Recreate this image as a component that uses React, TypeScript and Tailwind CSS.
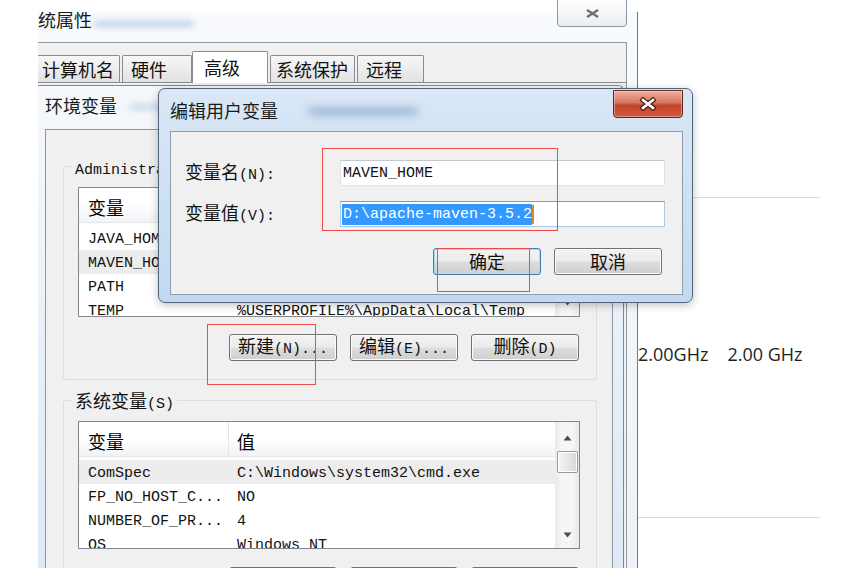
import React from "react";

const zh = "font-['Noto_Sans_CJK_SC',sans-serif] text-[18px]";
const en = "font-['Liberation_Mono','Noto_Sans_CJK_SC',monospace] text-[15px]";

const Z = ({ children }: { children: React.ReactNode }) => <span className={zh}>{children}</span>;
const M = ({ children }: { children: React.ReactNode }) => <span className={en}>{children}</span>;

type Row = [string, string];

const userVars: Row[] = [
  ["JAVA_HOME", "C:\\Program Files\\Java\\jdk1.8.0_151"],
  ["MAVEN_HOME", "D:\\apache-maven-3.5.2"],
  ["PATH", "%JAVA_HOME%\\bin;%MAVEN_HOME%\\bin"],
  ["TEMP", "%USERPROFILE%\\AppData\\Local\\Temp"],
  ["TMP", "%USERPROFILE%\\AppData\\Local\\Temp"],
];

const sysVars: Row[] = [
  ["ComSpec", "C:\\Windows\\system32\\cmd.exe"],
  ["FP_NO_HOST_C...", "NO"],
  ["NUMBER_OF_PR...", "4"],
  ["OS", "Windows_NT"],
  ["Path", "C:\\Windows\\system32;C:\\Windows"],
];

function WinButton({ children, focused = false }: { children: React.ReactNode; focused?: boolean }) {
  return (
    <div
      className={`flex h-[27px] w-[108px] shrink-0 items-center justify-center rounded-[3px] border bg-[linear-gradient(#f3f3f3_0%,#ebebeb_48%,#dddddd_52%,#cfcfcf_100%)] text-[#111] ${
        focused
          ? "border-[#3c7fb1] shadow-[inset_0_0_0_1px_#a6def7]"
          : "border-[#707070] shadow-[inset_0_0_0_1px_#fcfcfc]"
      }`}
    >
      <span className="whitespace-nowrap leading-[18px]">{children}</span>
    </div>
  );
}

function Scrollbar() {
  return (
    <div className="flex h-full w-[24px] shrink-0 flex-col items-center bg-[linear-gradient(90deg,#e9e9e9,#f6f6f6_30%,#f6f6f6_70%,#e9e9e9)]">
      <svg className="mt-[13px]" width="9" height="6" viewBox="0 0 9 6">
        <path d="M0.5 5.5 L4.5 0.5 L8.5 5.5Z" fill="#4d4d4d" />
      </svg>
      <div className="mt-[10px] h-[22px] w-[21px] rounded-[2px] border border-[#9a9a9a] bg-[linear-gradient(90deg,#f6f6f6,#e8e8e8_50%,#d8d8d8)] shadow-[inset_0_0_0_1px_#ffffff]" />
      <div className="flex-1" />
      <svg className="mb-[10px]" width="9" height="6" viewBox="0 0 9 6">
        <path d="M0.5 0.5 L4.5 5.5 L8.5 0.5Z" fill="#4d4d4d" />
      </svg>
    </div>
  );
}

function VarList({ rows, highlight, h }: { rows: Row[]; highlight: number; h: string }) {
  return (
    <div className={`flex w-[502px] overflow-hidden border border-[#828790] bg-white ${h}`}>
      <div className="flex min-w-0 flex-1 flex-col">
        <div className="flex h-[35px] shrink-0 border-b border-[#e3e6ea] bg-[linear-gradient(#ffffff_45%,#f1f3f5_100%)] leading-[18px]">
          <div className="flex w-[150px] items-center border-r border-[#e3e6ea] pl-[9px] pt-[3px]">
            <Z>变量</Z>
          </div>
          <div className="flex items-center pl-[8px] pt-[3px]">
            <Z>值</Z>
          </div>
        </div>
        <div className="mt-[3px]">
          {rows.map(([k, v], i) => (
            <div
              key={k}
              className={`flex h-[24px] items-center whitespace-nowrap leading-[24px] text-[#111] ${
                i === highlight ? "bg-[#ededed]" : ""
              }`}
            >
              <div className="w-[150px] shrink-0 pl-[9px]">
                <M>{k}</M>
              </div>
              <div className="pl-[8px]">
                <M>{v}</M>
              </div>
            </div>
          ))}
        </div>
      </div>
      <Scrollbar />
    </div>
  );
}

function Tab({ label, w, pl, extra = "", selected = false }: { label: string; w: string; pl: string; extra?: string; selected?: boolean }) {
  return (
    <div
      className={`flex items-center border border-b-0 border-[#898c95] leading-[18px] text-[#111] ${w} ${pl} ${extra} ${
        selected ? "z-10 -mb-[1px] h-[32px] rounded-t-[2px] bg-white pb-[1px]" : "h-[27px] rounded-t-[2px] bg-[linear-gradient(#f7f7f7,#e2e2e2)]"
      }`}
    >
      <Z>{label}</Z>
    </div>
  );
}

function SystemWindow() {
  return (
    <div className="absolute left-[38px] top-[12px] flex h-[556px] w-[600px] flex-col overflow-hidden border-r border-[#6b7785] bg-[linear-gradient(#f8fafc,#eef2f6)]">
      <div className="flex h-[30px] shrink-0 items-start leading-[18px] text-[#1a1a1a]">
        <span className={`-ml-[18px] -mt-[2px] ${zh}`}>系统属性</span>
        <div className="ml-[2px] mt-[9px] h-[6px] w-[100px] rounded-full bg-[#bcd0e4] blur-[3px]" />
      </div>
      <div className="mr-[10px] flex-1 border-r border-t border-[#8e99a6] bg-[#f0f0f0]">
        <div className="flex h-[40px] items-end border-b border-[#898c95]">
          <Tab label="计算机名" w="w-[84px]" pl="pl-[5px]" extra="-ml-[2px]" />
          <Tab label="硬件" w="w-[70px]" pl="pl-[8px]" extra="ml-[2px]" />
          <Tab label="高级" w="w-[76px]" pl="pl-[11px]" selected />
          <Tab label="系统保护" w="w-[85px]" pl="pl-[5px]" extra="ml-[2px]" />
          <Tab label="远程" w="w-[67px]" pl="pl-[8px]" extra="ml-[2px]" />
        </div>
      </div>
    </div>
  );
}

function EnvWindow() {
  return (
    <div className="absolute left-[38px] top-[85px] flex h-[483px] w-[586px] flex-col overflow-hidden rounded-tr-[6px] border-r border-t border-[#7d8896] bg-[linear-gradient(#f5f8fb,#dde9f4)]">
      <div className="flex h-[43px] shrink-0 items-start pl-[7px] pt-[10px] leading-[18px] text-[#1a1a1a]">
        <Z>环境变量</Z>
        <div className="ml-[12px] mt-[8px] h-[6px] w-[90px] rounded-full bg-[#c9d8e8] blur-[3px]" />
      </div>
      <div className="ml-[7px] mr-[10px] flex-1 border-l border-r border-t border-[#8d97a3] bg-[#f0f0f0]">
        <fieldset className="ml-[17px] mt-[27px] w-[534px] rounded-[3px] border border-[#d5dfe5]">
          <legend className="ml-[8px] flex h-[18px] items-baseline whitespace-nowrap px-[3px] leading-[18px] text-[#111]">
            <M>Administrator&nbsp;</M>
            <Z>的用户变量</Z>
            <M>(U)</M>
          </legend>
          <div className="ml-[14px] mt-[12px]">
            <VarList rows={userVars} highlight={1} h="h-[130px]" />
          </div>
          <div className="mt-[17px] flex justify-end gap-[13px] pb-[18px] pr-[17px]">
            <WinButton>
              <Z>新建</Z>
              <M>(N)...</M>
            </WinButton>
            <WinButton>
              <Z>编辑</Z>
              <M>(E)...</M>
            </WinButton>
            <WinButton>
              <Z>删除</Z>
              <M>(D)</M>
            </WinButton>
          </div>
        </fieldset>
        <fieldset className="ml-[17px] mt-[11px] w-[534px] rounded-[3px] border border-[#d5dfe5]">
          <legend className="ml-[8px] flex h-[18px] items-baseline whitespace-nowrap px-[3px] leading-[18px] text-[#111]">
            <Z>系统变量</Z>
            <M>(S)</M>
          </legend>
          <div className="ml-[14px] mt-[12px]">
            <VarList rows={sysVars} highlight={0} h="h-[128px]" />
          </div>
          <div className="mt-[18px] flex justify-end gap-[13px] pb-[18px] pr-[17px]">
            <WinButton>
              <Z>新建</Z>
              <M>(W)...</M>
            </WinButton>
            <WinButton>
              <Z>编辑</Z>
              <M>(I)...</M>
            </WinButton>
            <WinButton>
              <Z>删除</Z>
              <M>(L)</M>
            </WinButton>
          </div>
        </fieldset>
      </div>
    </div>
  );
}

function EditDialog() {
  return (
    <div className="absolute left-[158px] top-[88px] flex h-[215px] w-[535px] flex-col rounded-[7px] border border-[#51647a] bg-[linear-gradient(#d9e7f6,#c3d9f0)] pb-[7px] pl-[11px] pr-[9px] shadow-[0_2px_8px_rgba(0,0,0,0.25)]">
      <div className="relative flex h-[42px] shrink-0 items-center leading-[18px] text-[#1a1a1a]">
        <Z>编辑用户变量</Z>
        <div className="ml-[30px] mt-[2px] h-[7px] w-[110px] rounded-full bg-[#94b0d0] blur-[4px]" />
        <div className="absolute right-0 top-[1px] flex h-[28px] w-[70px] items-center justify-center rounded-b-[4px] border border-[#5c2a21] bg-[linear-gradient(#eab0a2_0%,#d7765f_45%,#c4432a_55%,#cd5a3f_100%)] shadow-[inset_0_0_0_1px_rgba(255,255,255,0.35)]">
          <svg width="18" height="14" viewBox="0 0 18 14">
            <path d="M4 3 L14 11 M14 3 L4 11" stroke="#4a1d14" strokeWidth="5" strokeLinecap="square" />
            <path d="M4 3 L14 11 M14 3 L4 11" stroke="#ffffff" strokeWidth="2.6" strokeLinecap="square" />
          </svg>
        </div>
      </div>
      <div className="flex flex-1 flex-col border border-[#8e9cad] bg-[#f0f0f0] pt-[28px]">
        <div className="flex items-center leading-[18px] text-[#111]">
          <div className="w-[169px] whitespace-nowrap pl-[14px]">
            <Z>变量名</Z>
            <M>(N):</M>
          </div>
          <div className="flex h-[26px] w-[325px] items-center border border-[#dfe2e8] border-t-[#c3c7cf] bg-white pl-[2px] pt-[2px]">
            <M>MAVEN_HOME</M>
          </div>
        </div>
        <div className="mt-[15px] flex items-center leading-[18px] text-[#111]">
          <div className="w-[169px] whitespace-nowrap pl-[14px]">
            <Z>变量值</Z>
            <M>(V):</M>
          </div>
          <div className="flex h-[26px] w-[325px] items-center border border-[#a9c8e6] border-t-[#6f9fcf] bg-white pl-[1px]">
            <span className={`inline-block bg-[#3399ff] pl-[1px] leading-[21px] text-white ${en}`}>D:\apache-maven-3.5.2</span>
            <span className="inline-block h-[19px] w-[2px] bg-[#d88a2a]" />
          </div>
        </div>
        <div className="mt-[21px] flex justify-end gap-[13px] pr-[20px]">
          <WinButton focused>
            <Z>确定</Z>
          </WinButton>
          <WinButton>
            <Z>取消</Z>
          </WinButton>
        </div>
      </div>
    </div>
  );
}

function BackPanel() {
  return (
    <div className="absolute left-[600px] top-0 flex h-[568px] w-[220px] flex-col bg-white">
      <div className="h-[198px] shrink-0 border-b border-[#d9d9d9]" />
      <div className="mt-[144px] flex h-[24px] items-center whitespace-nowrap pl-[38px] font-['Open_Sans',sans-serif] text-[18px] leading-[24px] text-[#1e1e1e]">
        <span>2.00GHz</span>
        <span className="ml-[19px]">2.00 GHz</span>
      </div>
      <div className="mt-[151px] border-b border-[#d9d9d9]" />
    </div>
  );
}

export default function App() {
  return (
    <div className="relative h-[586px] w-[841px] overflow-hidden bg-white">
      <BackPanel />
      <SystemWindow />
      <div className="absolute left-[557px] top-[-2px] flex h-[29px] w-[70px] items-end justify-center rounded-b-[4px] border border-[#8b97a5] bg-[linear-gradient(#ffffff,#e9edf2)] pb-[8px]">
        <svg width="15" height="9" viewBox="0 0 15 9">
          <path d="M2 1 L13 8 M13 1 L2 8" stroke="#707070" strokeWidth="2.4" />
        </svg>
      </div>
      <EnvWindow />
      <EditDialog />
      <div className="absolute left-[322px] top-[148px] h-[83px] w-[236px] border border-[#ef4b4b]" />
      <div className="absolute left-[437px] top-[248px] h-[44px] w-[93px] border border-[#ef4b4b]" />
      <div className="absolute left-[207px] top-[324px] h-[61px] w-[109px] border border-[#ef4b4b]" />
    </div>
  );
}
